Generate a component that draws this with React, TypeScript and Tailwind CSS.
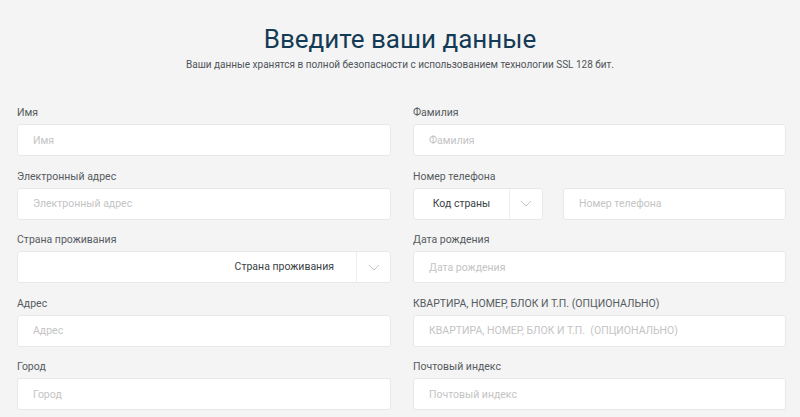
function Chevron() {
  return (
    <svg width="12" height="7" viewBox="0 0 12 7" fill="none">
      <path d="M1 1l5 5 5-5" stroke="#c3c9cf" strokeWidth="1" />
    </svg>
  );
}

function Field({ label, children }: { label: string; children: React.ReactNode }) {
  return (
    <div className="flex flex-col">
      <label className="h-[14px] text-[10.5px] leading-[14px] text-[#555b60] mb-[4px]">{label}</label>
      {children}
    </div>
  );
}

function TextInput({ placeholder }: { placeholder: string }) {
  return (
    <input
      placeholder={placeholder}
      className="h-[32px] w-full rounded-[3px] border border-[#e6e9eb] bg-white px-[15px] text-[10.5px] text-[#333] placeholder:text-[#c4c4c4] outline-none"
    />
  );
}

export default function App() {
  return (
    <div className="min-h-[417px] w-[800px] bg-[#f4f4f4] font-['Roboto',sans-serif]">
      <div className="flex flex-col items-center pt-[23px]">
        <h1 className="text-[26px] leading-[32px] text-[#143b55]">Введите ваши данные</h1>
        <p className="mt-[3px] text-[10px] leading-[14px] text-[#4f555a]">
          Ваши данные хранятся в полной безопасности с использованием технологии SSL 128 бит.
        </p>
      </div>

      <div className="mt-[34px] grid grid-cols-[374px_373px] gap-x-[22px] gap-y-[13.5px] pl-[17px]">
        <Field label="Имя">
          <TextInput placeholder="Имя" />
        </Field>
        <Field label="Фамилия">
          <TextInput placeholder="Фамилия" />
        </Field>

        <Field label="Электронный адрес">
          <TextInput placeholder="Электронный адрес" />
        </Field>
        <Field label="Номер телефона">
          <div className="flex gap-[20px]">
            <div className="flex h-[32px] w-[130px] shrink-0 rounded-[3px] border border-[#e6e9eb] bg-white">
              <div className="flex flex-1 items-center justify-center text-[10.5px] text-[#3a3f44]">Код страны</div>
              <div className="flex w-[33px] items-center justify-center border-l border-[#eceff1]">
                <Chevron />
              </div>
            </div>
            <TextInput placeholder="Номер телефона" />
          </div>
        </Field>

        <Field label="Страна проживания">
          <div className="flex h-[32px] rounded-[3px] border border-[#e6e9eb] bg-white">
            <div className="flex flex-1 items-center justify-end pr-[22px] text-[10.5px] text-[#3a3f44]">Страна проживания</div>
            <div className="flex w-[34px] items-center justify-center border-l border-[#eceff1]">
              <Chevron />
            </div>
          </div>
        </Field>
        <Field label="Дата рождения">
          <TextInput placeholder="Дата рождения" />
        </Field>

        <Field label="Адрес">
          <TextInput placeholder="Адрес" />
        </Field>
        <Field label="КВАРТИРА, НОМЕР, БЛОК И Т.П. (ОПЦИОНАЛЬНО)">
          <TextInput placeholder="КВАРТИРА, НОМЕР, БЛОК И Т.П.  (ОПЦИОНАЛЬНО)" />
        </Field>

        <Field label="Город">
          <TextInput placeholder="Город" />
        </Field>
        <Field label="Почтовый индекс">
          <TextInput placeholder="Почтовый индекс" />
        </Field>
      </div>
    </div>
  );
}
